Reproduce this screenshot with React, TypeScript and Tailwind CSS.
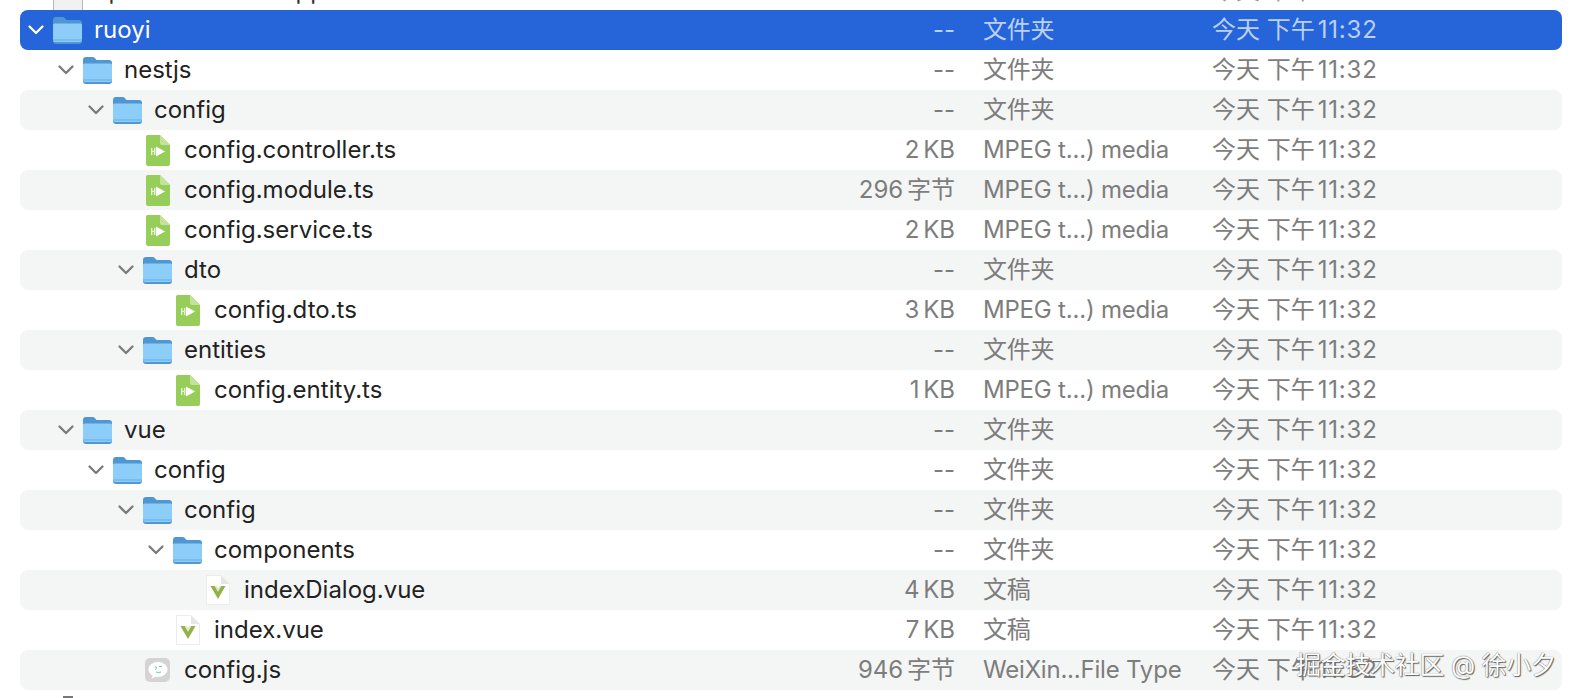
import React from "react";

type Row = {
  name: string;
  level: number;
  icon: "folder" | "ts" | "vue" | "js";
  size: string;
  kind: string;
};

const FOLDER = "文件夹";
const MPEG = "MPEG t...) media";

const rows: Row[] = [
  { name: "ruoyi", level: 0, icon: "folder", size: "--", kind: FOLDER },
  { name: "nestjs", level: 1, icon: "folder", size: "--", kind: FOLDER },
  { name: "config", level: 2, icon: "folder", size: "--", kind: FOLDER },
  { name: "config.controller.ts", level: 3, icon: "ts", size: "2 KB", kind: MPEG },
  { name: "config.module.ts", level: 3, icon: "ts", size: "296 字节", kind: MPEG },
  { name: "config.service.ts", level: 3, icon: "ts", size: "2 KB", kind: MPEG },
  { name: "dto", level: 3, icon: "folder", size: "--", kind: FOLDER },
  { name: "config.dto.ts", level: 4, icon: "ts", size: "3 KB", kind: MPEG },
  { name: "entities", level: 3, icon: "folder", size: "--", kind: FOLDER },
  { name: "config.entity.ts", level: 4, icon: "ts", size: "1 KB", kind: MPEG },
  { name: "vue", level: 1, icon: "folder", size: "--", kind: FOLDER },
  { name: "config", level: 2, icon: "folder", size: "--", kind: FOLDER },
  { name: "config", level: 3, icon: "folder", size: "--", kind: FOLDER },
  { name: "components", level: 4, icon: "folder", size: "--", kind: FOLDER },
  { name: "indexDialog.vue", level: 5, icon: "vue", size: "4 KB", kind: "文稿" },
  { name: "index.vue", level: 4, icon: "vue", size: "7 KB", kind: "文稿" },
  { name: "config.js", level: 3, icon: "js", size: "946 字节", kind: "WeiXin...File Type" },
];

const indent = ["pl-[7px]", "pl-[37px]", "pl-[67px]", "pl-[97px]", "pl-[127px]", "pl-[157px]"];

function Chevron({ selected }: { selected: boolean }) {
  return (
    <svg width="18" height="12" viewBox="0 0 18 12" fill="none">
      <path
        d="M2.5 2.5 L9 9 L15.5 2.5"
        stroke={selected ? "#ffffff" : "#7a7a7a"}
        strokeWidth="2.3"
        strokeLinecap="round"
        strokeLinejoin="round"
      />
    </svg>
  );
}

function FolderIcon() {
  return (
    <svg width="29" height="27" viewBox="0 0 29 27">
      <path d="M0 3 Q0 0 3 0 H9.5 Q11 0 12 1.2 L13.5 3 H26 Q29 3 29 6 V24 Q29 27 26 27 H3 Q0 27 0 24 Z" fill="#4f96d3" />
      <path d="M0 8 Q0 6.5 1.5 6.5 H27.5 Q29 6.5 29 8 V23 Q29 25 27 25 H2 Q0 25 0 23 Z" fill="#8ccdf9" />
      <rect x="0" y="22.5" width="29" height="1" fill="#66ade4" />
    </svg>
  );
}

function TsIcon() {
  return (
    <svg width="24" height="31" viewBox="0 0 24 31">
      <path d="M1.5 0 H14 L24 10 V29 Q24 31 22 31 H2 Q0 31 0 29 V1.5 Q0 0 1.5 0 Z" fill="#97cd59" />
      <path d="M14 0 L24 10 H16 Q14 10 14 8 Z" fill="#c3e39b" />
      <rect x="5" y="13" width="1.4" height="7" fill="#e4f3d1" />
      <rect x="8" y="13" width="1.4" height="7" fill="#e4f3d1" />
      <rect x="5" y="15.8" width="4" height="1.2" fill="#e4f3d1" />
      <path d="M10 11.5 L19 16.5 L10 21.5 Z" fill="#ffffff" />
    </svg>
  );
}

function VueIcon() {
  return (
    <svg width="24" height="30" viewBox="0 0 24 30">
      <path d="M0.5 0.5 H15 L23.5 9 V29.5 H0.5 Z" fill="#ffffff" stroke="#ececec" />
      <path d="M15 0.5 L23.5 9 H15 Z" fill="#e6e6e6" />
      <path d="M4.5 11 H9 L12 16 L15 11 H19.5 L12 24 Z" fill="#94b04a" />
      <path d="M8.6 11 H10.6 L12 13.6 L13.4 11 H15.4 L12 17 Z" fill="#dfe8c4" />
    </svg>
  );
}

function JsIcon() {
  return (
    <svg width="25" height="24" viewBox="0 0 25 24">
      <rect width="25" height="24" rx="5" fill="#d4d4d4" />
      <ellipse cx="13" cy="11.5" rx="9.5" ry="7.5" fill="#ffffff" />
      <path d="M8 17 L6.5 20.5 L12 18 Z" fill="#ffffff" />
      <path d="M10 8.5 L12 10 L10 11.5" stroke="#7cc5a5" strokeWidth="1" fill="none" />
      <path d="M14 8.5 H17" stroke="#7cc5a5" strokeWidth="1" />
      <path d="M11 14 Q13.5 15.5 16 14" stroke="#7cc5a5" strokeWidth="1" fill="none" />
    </svg>
  );
}

function Icon({ type }: { type: Row["icon"] }) {
  if (type === "folder") return <FolderIcon />;
  if (type === "ts") return <TsIcon />;
  if (type === "vue") return <VueIcon />;
  return <JsIcon />;
}

function DateText() {
  return (
    <div className="whitespace-nowrap">
      今天 下午<span className="ml-[3px] tracking-[0.8px]">11:32</span>
    </div>
  );
}

export default function App() {
  return (
    <div className="relative h-[698px] w-[1576px] overflow-hidden bg-white font-['Inter','Noto_Sans_CJK_SC',sans-serif] text-[24px] leading-[32px] text-[#222222]">
      <div className="h-[10px] overflow-hidden px-[20px]">
        <div className="-mt-[29px] flex h-10 items-center text-[#333333]">
          <div className="flex w-[856px] shrink-0 items-center pl-[33px]">
            <div className="mt-[26px] h-[32px] w-[30px] shrink-0 rounded-[3px] border border-[#b8b8b8] bg-[#f1f1f1]" />
            <span className="ml-[11px] whitespace-nowrap">open-source-ui-app</span>
          </div>
          <div className="ml-[336px] text-[#9a9a9a]">
            <DateText />
          </div>
        </div>
      </div>
      <div className="pl-[20px] pr-[14px]">
        {rows.map((r, i) => {
          const selected = i === 0;
          const bg = selected ? "bg-[#2564d9] text-white" : i % 2 === 0 ? "bg-[#f4f5f5]" : "bg-white";
          const secondary = selected ? "text-[#bcd0f5]" : "text-[#7d7d7d]";
          return (
            <div key={i} className={`flex h-10 items-center rounded-[8px] ${bg}`}>
              <div className={`flex w-[776px] shrink-0 items-center ${indent[r.level]}`}>
                <div className="flex w-[18px] shrink-0 justify-center">
                  {r.icon === "folder" && <Chevron selected={selected} />}
                </div>
                <div className="ml-[8px] flex w-[29px] shrink-0 justify-center">
                  <Icon type={r.icon} />
                </div>
                <span className="ml-[12px] whitespace-nowrap">{r.name}</span>
              </div>
              <div className={`w-[159px] shrink-0 whitespace-nowrap text-right [word-spacing:-3px] ${secondary}`}>{r.size}</div>
              <div className={`ml-[28px] w-[229px] shrink-0 whitespace-nowrap tracking-[-0.2px] ${secondary}`}>{r.kind}</div>
              <div className={secondary}>
                <DateText />
              </div>
            </div>
          );
        })}
      </div>
      <div className="pl-[63px]">
        <div className="mt-[6px] h-[2px] w-[10px] bg-[#777777]" />
      </div>
      <div className="absolute left-[1296px] top-[649px] whitespace-nowrap text-[25px] tracking-[-0.3px] text-white [text-shadow:0_0_1px_#444,1px_1px_1px_#666]">
        掘金技术社区 @ 徐小夕
      </div>
    </div>
  );
}
